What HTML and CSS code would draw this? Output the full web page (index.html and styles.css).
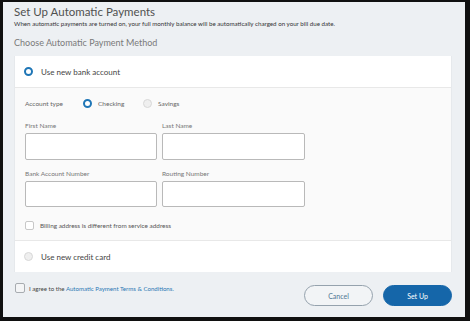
FILE: index.html
```html
<!DOCTYPE html>
<html>
<head>
<meta charset="utf-8">
<link rel="stylesheet" href="styles.css">
</head>
<body>
<div class="frame">
  <h1 class="title">Set Up Automatic Payments</h1>
  <p class="subtitle">When automatic payments are turned on, your full monthly balance will be automatically charged on your bill due date.</p>
  <h2 class="section">Choose Automatic Payment Method</h2>
  <div class="card">
    <div class="option">
      <span class="radio on"></span>
      <span class="option-label">Use new bank account</span>
    </div>
    <div class="details">
      <div class="acct-row">
        <span class="acct-label">Account type</span>
        <span class="small-radio"><span class="radio on"></span><span>Checking</span></span>
        <span class="small-radio"><span class="radio off"></span><span>Savings</span></span>
      </div>
      <div class="fields">
        <div class="field">
          <span class="field-label">First Name</span>
          <span class="input"></span>
        </div>
        <div class="field">
          <span class="field-label">Last Name</span>
          <span class="input"></span>
        </div>
        <div class="field">
          <span class="field-label">Bank Account Number</span>
          <span class="input"></span>
        </div>
        <div class="field">
          <span class="field-label">Routing Number</span>
          <span class="input"></span>
        </div>
      </div>
      <div class="billing">
        <span class="checkbox"></span>
        <span>Billing address is different from service address</span>
      </div>
    </div>
    <div class="option">
      <span class="radio off"></span>
      <span class="option-label">Use new credit card</span>
    </div>
  </div>
  <div class="footer">
    <div class="agree">
      <span class="checkbox big"></span>
      <span>I agree to the <a class="link">Automatic Payment Terms &amp; Conditions.</a></span>
    </div>
    <div class="buttons">
      <button class="btn cancel">Cancel</button>
      <button class="btn primary">Set Up</button>
    </div>
  </div>
</div>
</body>
</html>
```

FILE: styles.css
```css
html, body {
  margin: 0;
  padding: 0;
  background: #101010;
}
body {
  width: 470px;
  height: 321px;
  overflow: hidden;
  font-family: Lato, "Open Sans", sans-serif;
}
.frame {
  margin: 2px 5px 0 3px;
  height: 315px;
  background: #edf0f3;
  padding: 3px 13px 0 11px;
  box-sizing: border-box;
}
.title {
  margin: 0;
  font-size: 11.5px;
  line-height: 13px;
  font-weight: 400;
  color: #505050;
}
.subtitle {
  margin: 2px 0 0;
  font-size: 6.2px;
  line-height: 8px;
  color: #333;
}
.section {
  margin: 9px 0 0;
  font-size: 9px;
  line-height: 11px;
  font-weight: 400;
  color: #7a7a7a;
}
.card {
  margin-top: 8px;
  background: #fff;
  border: 1px solid #e6e9ec;
  border-top: none;
  border-bottom: none;
}
.option {
  height: 31px;
  display: flex;
  align-items: center;
  padding-left: 9px;
  gap: 8px;
}
.option-label {
  font-size: 8px;
  color: #454545;
}
.radio {
  width: 9px;
  height: 9px;
  border-radius: 50%;
  box-sizing: border-box;
  flex: none;
}
.radio.on {
  border: 2.5px solid #1f76b6;
  background: #fff;
}
.radio.off {
  border: 1px solid #d8d8d8;
  background: #efefef;
}
.details {
  background: #fafafa;
  border-top: 1px solid #e8e8e8;
  border-bottom: 1px solid #e8e8e8;
  padding: 9px 0 10px 10px;
}
.acct-row {
  display: flex;
  align-items: center;
  height: 12px;
  font-size: 6.5px;
  color: #666;
}
.acct-label {
  width: 58px;
}
.small-radio {
  display: flex;
  align-items: center;
  gap: 6px;
  width: 60px;
}
.fields {
  margin-top: 12px;
  display: grid;
  grid-template-columns: 132px 143px;
  column-gap: 5px;
  row-gap: 9px;
}
.field {
  display: flex;
  flex-direction: column;
  gap: 3px;
}
.field-label {
  font-size: 6.5px;
  line-height: 9px;
  color: #777;
}
.input {
  height: 26.5px;
  box-sizing: border-box;
  border: 1px solid #b9b9b9;
  border-radius: 2px;
  background: #fff;
}
.billing {
  margin-top: 13px;
  display: flex;
  align-items: center;
  gap: 6px;
  font-size: 6.4px;
  color: #555;
  height: 10px;
}
.checkbox {
  width: 9px;
  height: 9px;
  box-sizing: border-box;
  border: 1px solid #c8c8c8;
  border-radius: 2px;
  background: #fff;
  flex: none;
}
.checkbox.big {
  width: 10px;
  height: 10px;
  border-color: #a8acb0;
  background: #f4f5f6;
}
.footer {
  margin-top: 11px;
  display: flex;
  justify-content: space-between;
  align-items: flex-start;
}
.agree {
  display: flex;
  align-items: center;
  gap: 4px;
  font-size: 6.1px;
  color: #444;
  margin-left: 1px;
}
.link {
  color: #2b78b4;
}
.buttons {
  display: flex;
  gap: 10px;
  margin-top: 2px;
}
.btn {
  height: 21px;
  width: 69px;
  border-radius: 11px;
  font-family: Lato, "Open Sans", sans-serif;
  font-size: 7px;
  padding: 0;
  box-sizing: border-box;
}
.cancel {
  background: #f2f4f6;
  border: 1px solid #95a2ad;
  color: #4f7694;
}
.primary {
  background: #1566a9;
  border: 1px solid #1566a9;
  color: #fff;
}
```
